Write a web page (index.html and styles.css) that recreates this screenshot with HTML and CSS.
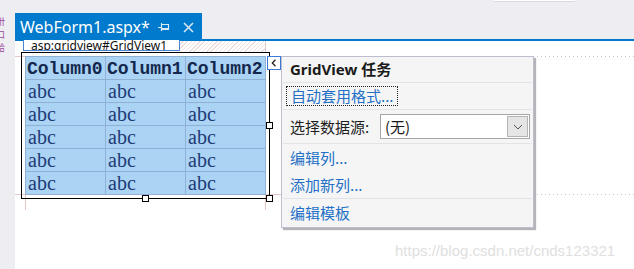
FILE: index.html
```html
<!DOCTYPE html>
<html lang="zh-CN">
<head>
<meta charset="utf-8">
<title>WebForm1.aspx</title>
<link rel="stylesheet" href="styles.css">
</head>
<body>
<div class="app">
  <div class="leftstrip">
    <div class="glyphs"><span>卅</span><span>口</span><span>蛤</span></div>
  </div>
  <div class="main">
    <div class="topbar">
      <div class="peek"></div>
      <div class="tab">
        <span class="tab-title">WebForm1.aspx*</span>
        <svg class="tab-pin" width="12" height="10" viewBox="0 0 12 10">
          <path d="M0 5.5H3.5M3.5 1V9M3.5 2.5H10.5V7.5H3.5M3.5 6.5H10.5" fill="none" stroke="#dbe9f6" stroke-width="1.2"/>
        </svg>
        <svg class="tab-close" width="11" height="11" viewBox="0 0 11 11">
          <path d="M1 1L10 10M10 1L1 10" stroke="#dbe9f6" stroke-width="1.5"/>
        </svg>
      </div>
    </div>
    <div class="accent"></div>
    <div class="canvas">
      <div class="guide guide-h-top"></div>
      <div class="guide guide-h-bottom"></div>
      <div class="guide guide-v guide-v-left"></div>
      <div class="guide guide-v guide-v-right"></div>
      <div class="dotted dotted-top"></div>
      <div class="dotted dotted-bottom"></div>

      <div class="selector-row">
        <div class="selector-label">asp:gridview#GridView1</div>
        <div class="selector-hatch"></div>
      </div>

      <div class="gv">
        <div class="grid">
          <div class="cell head">Column0</div><div class="cell head">Column1</div><div class="cell head">Column2</div>
          <div class="cell">abc</div><div class="cell">abc</div><div class="cell">abc</div>
          <div class="cell">abc</div><div class="cell">abc</div><div class="cell">abc</div>
          <div class="cell">abc</div><div class="cell">abc</div><div class="cell">abc</div>
          <div class="cell">abc</div><div class="cell">abc</div><div class="cell">abc</div>
          <div class="cell">abc</div><div class="cell">abc</div><div class="cell">abc</div>
        </div>
        <span class="handle handle-rm"></span>
        <span class="handle handle-bm"></span>
        <span class="handle handle-br"></span>
      </div>

      <div class="smarttag">
        <svg width="6" height="8" viewBox="0 0 6 8"><path d="M4.5 0.8L1.3 4L4.5 7.2" fill="none" stroke="#222" stroke-width="1.3"/></svg>
      </div>

      <div class="tasks">
        <div class="tasks-title">GridView 任务</div>
        <div class="sep"></div>
        <div class="row row-link1"><span class="link focused">自动套用格式...</span></div>
        <div class="sep"></div>
        <div class="row row-combo">
          <span class="combo-label">选择数据源:</span>
          <div class="combo">
            <span class="combo-value">(无)</span>
            <span class="combo-btn">
              <svg width="10" height="6" viewBox="0 0 10 6"><path d="M1 1L5 5L9 1" fill="none" stroke="#555" stroke-width="1"/></svg>
            </span>
          </div>
        </div>
        <div class="sep"></div>
        <div class="row row-link"><span class="link">编辑列...</span></div>
        <div class="row row-link"><span class="link">添加新列...</span></div>
        <div class="sep"></div>
        <div class="row row-link row-last"><span class="link">编辑模板</span></div>
      </div>

      <div class="watermark">https://blog.csdn.net/cnds123321</div>
    </div>
  </div>
</div>
</body>
</html>
```

FILE: styles.css
```css
* { box-sizing: border-box; }
html, body { margin: 0; padding: 0; }
body {
  width: 634px;
  height: 269px;
  overflow: hidden;
  background: #ffffff;
  font-family: "Noto Sans", "Noto Sans CJK SC", sans-serif;
}
.app {
  display: flex;
  width: 634px;
  height: 269px;
}
.leftstrip {
  width: 15px;
  flex: none;
  background: #eeeef2;
  overflow: hidden;
}
.glyphs {
  display: flex;
  flex-direction: column;
  margin-top: 15px;
  margin-left: -4px;
  color: #9a4a9e;
  font-family: "Noto Sans CJK SC", sans-serif;
  font-size: 9px;
  line-height: 13px;
}
.glyphs span {
  display: block;
  height: 13px;
}
.main {
  flex: 1;
  display: flex;
  flex-direction: column;
  min-width: 0;
}
.topbar {
  position: relative;
  height: 39px;
  background: #eeeef2;
  display: flex;
  align-items: flex-end;
}
.peek {
  position: absolute;
  left: 479px;
  top: 0;
  width: 81px;
  height: 2px;
  background: #ffffff;
  border-bottom: 1px solid #d8d8de;
}
.tab {
  width: 187px;
  height: 26px;
  background: #007acc;
  display: flex;
  align-items: center;
  padding-left: 5px;
  color: #ffffff;
}
.tab-title {
  font-size: 16px;
  line-height: 20px;
  width: 133px;
  padding-top: 1px;
  white-space: nowrap;
}
.tab-pin { margin-left: 5px; margin-top: 1px; }
.tab-close { margin-left: 13px; margin-top: 2px; }
.accent {
  height: 2px;
  background: #007acc;
}
.canvas {
  flex: 1;
  position: relative;
  background: #ffffff;
}
.guide {
  position: absolute;
  background: #e6c8c8;
}
.guide-h-top { left: 0; top: 15px; width: 10px; height: 1px; }
.guide-h-bottom { left: 0; top: 153px; width: 266px; height: 1px; }
.guide-v { top: 153px; width: 1px; height: 16px; }
.guide-v-left { left: 10px; }
.guide-v-right { left: 250px; }
.dotted {
  position: absolute;
  left: 518px;
  right: 0;
  height: 1px;
  background: repeating-linear-gradient(90deg, #c4c4cc 0 1px, transparent 1px 4px);
}
.dotted-top { top: 15px; }
.dotted-bottom { top: 153px; }

.selector-row {
  display: flex;
  margin-left: 8px;
  height: 10px;
}
.selector-label {
  width: 157px;
  background: #ffffff;
  border: 1px solid #4a82d6;
  border-top: none;
  font-size: 12px;
  line-height: 12px;
  padding-left: 7px;
  margin-top: -1px;
  height: 11px;
  overflow: hidden;
  color: #111;
  white-space: nowrap;
}
.selector-hatch {
  width: 86px;
  height: 11px;
  border-right: 1px solid #e2cccc;
  background: repeating-linear-gradient(-45deg, #ffffff 0 2px, #efdede 2px 3px);
}
.gv {
  position: relative;
  margin-left: 6px;
  margin-top: 1px;
  width: 249px;
  border: 1px solid #000000;
  padding: 3px;
}
.grid {
  display: grid;
  grid-template-columns: 80px 80px 80px;
  width: 241px;
  border-left: 1px solid #8fb1d6;
  border-top: 1px solid #8fb1d6;
}
.cell {
  height: 23px;
  background: #aad3f4;
  border-right: 1px solid #8fb1d6;
  border-bottom: 1px solid #8fb1d6;
  padding-left: 2px;
  font-family: "Liberation Serif", serif;
  font-size: 20px;
  line-height: 22px;
  color: #1f3a78;
  white-space: nowrap;
  overflow: hidden;
}
.cell.head {
  font-family: "Liberation Mono", monospace;
  font-weight: bold;
  font-size: 18px;
  color: #14284e;
  padding-left: 1px;
  line-height: 24px;
}
.handle {
  position: absolute;
  width: 7px;
  height: 7px;
  background: #ffffff;
  border: 1px solid #000000;
}
.handle-rm { right: -4px; top: calc(50% - 4px); }
.handle-bm { left: calc(50% - 4px); bottom: -4px; }
.handle-br { right: -4px; bottom: -4px; }

.smarttag {
  position: absolute;
  left: 252px;
  top: 15px;
  width: 14px;
  height: 14px;
  background: #ffffff;
  border: 1px solid #3a7ad4;
  display: flex;
  align-items: center;
  justify-content: center;
}
.tasks {
  position: absolute;
  left: 266px;
  top: 15px;
  width: 253px;
  height: 172px;
  background: #f5f5f5;
  border: 1px solid #bdbdcf;
  box-shadow: 2px 2px 1px rgba(90, 90, 100, 0.45);
  display: flex;
  flex-direction: column;
  font-family: "Noto Sans CJK SC", sans-serif;
  font-size: 15px;
}
.tasks-title {
  height: 25px;
  line-height: 25px;
  padding-left: 8px;
  font-weight: bold;
  font-family: "Noto Sans", "Noto Sans CJK SC", sans-serif;
  color: #1a1a1a;
}
.sep {
  height: 1px;
  margin: 0 1px;
  background: #e2e2e8;
}
.row {
  display: flex;
  align-items: center;
}
.row-link1 { height: 26px; padding-left: 4px; }
.row-link { height: 27px; padding-left: 8px; }
.row-last { height: 28px; }
.link {
  color: #2370c6;
  line-height: 18px;
  white-space: nowrap;
}
.link.focused {
  border: 1px dotted #222;
  padding: 0 3px 0 4px;
  height: 20px;
}
.row-combo {
  height: 33px;
  padding-left: 8px;
  justify-content: space-between;
  padding-right: 3px;
}
.combo-label { color: #1e1e1e; line-height: 18px; }
.combo {
  width: 150px;
  height: 25px;
  background: #ffffff;
  border: 1px solid #a6a6a6;
  display: flex;
  align-items: center;
  padding: 1px;
}
.combo-value {
  flex: 1;
  padding-left: 3px;
  color: #1a1a1a;
  line-height: 18px;
}
.combo-btn {
  width: 21px;
  height: 21px;
  background: #e5e5e5;
  border: 1px solid #b4b4b4;
  display: flex;
  align-items: center;
  justify-content: center;
}
.watermark {
  position: absolute;
  left: 380px;
  top: 201px;
  font-family: "Liberation Sans", sans-serif;
  font-size: 15px;
  line-height: 17px;
  color: #e0e0e0;
  white-space: nowrap;
}
```
